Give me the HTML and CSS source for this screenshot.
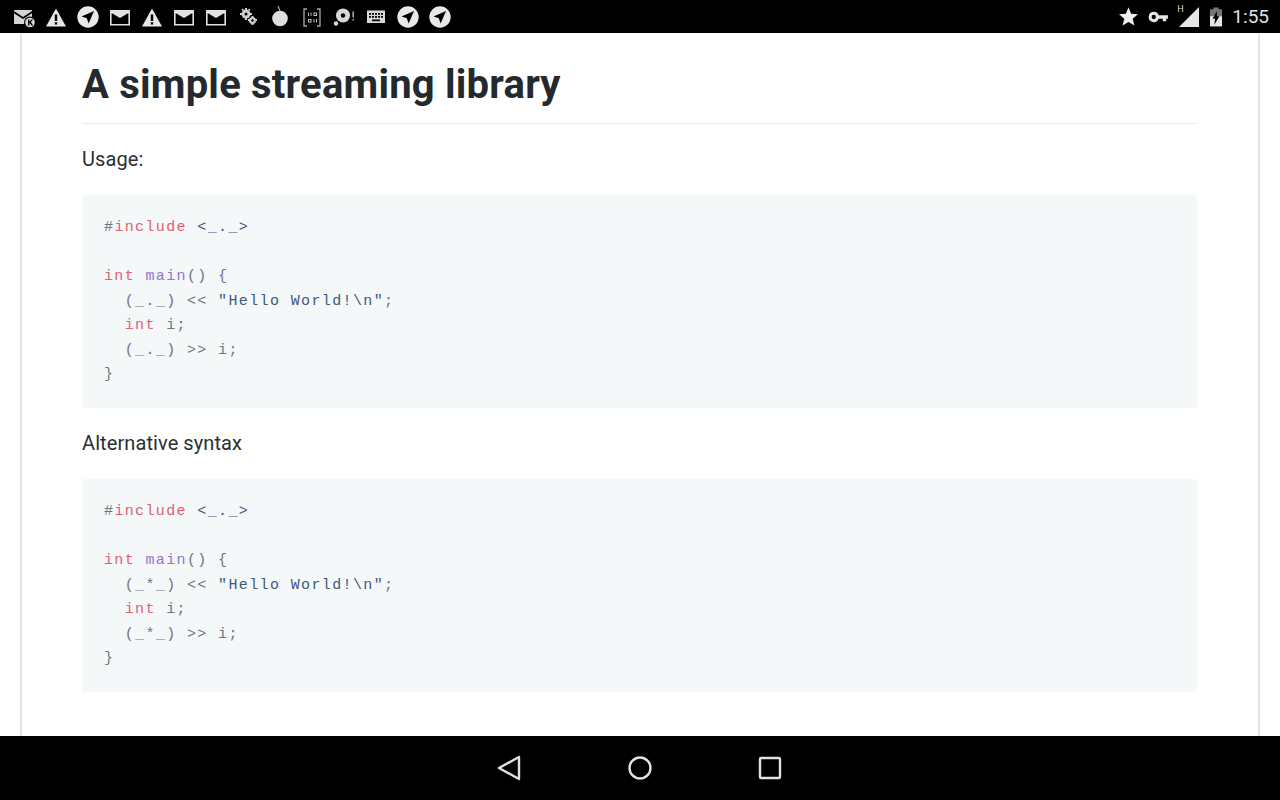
FILE: index.html
```html
<!DOCTYPE html>
<html lang="en">
<head>
<meta charset="utf-8">
<title>A simple streaming library</title>
<link rel="stylesheet" href="styles.css">
</head>
<body>
<svg class="defs" width="0" height="0" aria-hidden="true">
  <defs>
    <symbol id="warn" viewBox="0 0 24 24"><path fill="#e6e6e6" d="M2 21.500 12 3.500l10 18z"/><path fill="#000" d="M10.800 9.500h2.400v6.500h-2.400zM10.800 17.200h2.400v2.400h-2.400z"/></symbol>
    <symbol id="mail" viewBox="0 0 24 24"><path fill="#e2e2e2" d="M2 5h20v15.500H2z"/><path fill="#000" d="M3.600 8 12 13l8.400-5v10.900H3.600z"/></symbol>
    <symbol id="nav" viewBox="0 0 24 24"><circle cx="12" cy="12" r="10.700" fill="#e8e8e8"/><path fill="#000" d="M18 6 5.500 11.400l5.300 1.800 1.800 5.300z"/></symbol>
  </defs>
</svg>
<header class="status">
  <div class="status-left">
    <svg class="ic" viewBox="0 0 24 24"><path fill="#d4d4d4" d="M2 5h18v14H2z"/><path fill="#000" d="M2 6l9 6 9-6v2.200L11 14 2 8.200z"/><circle cx="18" cy="17.500" r="6" fill="#000"/><circle cx="18" cy="17.500" r="4.800" fill="#d8d8d8"/><path fill="#000" d="M16 14.500h1.400v2.300l2-2.300h1.700l-2.200 2.600 2.300 3.300h-1.700l-1.600-2.300-.5.500v1.800H16z"/></svg>
    <svg class="ic"><use href="#warn"/></svg>
    <svg class="ic"><use href="#nav"/></svg>
    <svg class="ic"><use href="#mail"/></svg>
    <svg class="ic"><use href="#warn"/></svg>
    <svg class="ic"><use href="#mail"/></svg>
    <svg class="ic"><use href="#mail"/></svg>
    <svg class="ic" viewBox="0 0 24 24"><g fill="#cfcfcf"><circle cx="10" cy="9" r="4.500"/><circle cx="16.500" cy="15.500" r="3.500"/><path d="M9 3h2v2H9zM9 13h2v2H9zM4 8h2v2H4zM14 8h2v2h-2zM5.500 4.500 7 3.500 8 5 6.500 6zM13 3.500l1.500 1-1 1.500L12 5zM15.500 11h2v2h-2zM19 14h2v2h-2zM15.500 18h2v2h-2zM12 14h2v2h-2z"/></g><circle cx="10" cy="9" r="1.500" fill="#000"/><circle cx="16.500" cy="15.500" r="1.200" fill="#000"/></svg>
    <svg class="ic" viewBox="0 0 24 24"><circle cx="12" cy="13.500" r="7.800" fill="#dedede"/><path d="M12 6 10 1" stroke="#aaa" stroke-width="1.200" fill="none"/></svg>
    <svg class="ic" viewBox="0 0 24 24"><path d="M7 4H4v17h3M17 4h3v17h-3" stroke="#aaa" stroke-width="1.300" fill="none"/><path fill="#bbb" d="M8 7.500h1v3.500H8zM10.500 7.500h1v3.500h-1zM13.500 7.500h3.500v3.500h-3.500zM8 14h3.500v3.500H8zM13.500 14h1v3.500h-1zM16 14h1v3.500h-1z"/><path fill="#000" d="M14.500 8.500H16V10h-1.500zM9 15h1.500v1.500H9z"/></svg>
    <svg class="ic" viewBox="0 0 24 24"><circle cx="11" cy="10.500" r="7" fill="#d8d8d8"/><circle cx="11" cy="10.500" r="2.200" fill="#000"/><circle cx="4" cy="18.500" r="2.200" fill="#d8d8d8"/><path fill="#bbb" d="M20.500 6.500h1.400v6h-1.400zM20.500 14h1.400v1.500h-1.400z"/></svg>
    <svg class="ic" viewBox="0 0 24 24"><path fill="#d8d8d8" d="M3 5.500h18V18H3z"/><path fill="#000" d="M5 8h2v1.800H5zM8 8h2v1.800H8zM11 8h2v1.800h-2zM14 8h2v1.800h-2zM17 8h2v1.800h-2zM5 11h2v1.800H5zM8 11h2v1.800H8zM11 11h2v1.800h-2zM14 11h2v1.800h-2zM17 11h2v1.800h-2zM8 14.500h8v1.800H8z"/></svg>
    <svg class="ic"><use href="#nav"/></svg>
    <svg class="ic"><use href="#nav"/></svg>
  </div>
  <div class="status-right">
    <svg class="ic-star" viewBox="0 0 24 24"><path fill="#eee" d="m12 1.500 3 7.300 7.800.6-6 5.200 1.900 7.700-6.700-4.100-6.700 4.100 1.900-7.700-6-5.200 7.800-.6z"/></svg>
    <svg class="ic-key" viewBox="0 0 24 14"><path fill="#e6e6e6" fill-rule="evenodd" d="M6.500 1a6 6 0 0 1 5.700 4H23v4h-2v3h-4V9h-4.800A6 6 0 1 1 6.500 1zm0 3.500a2.500 2.500 0 1 0 0 5 2.500 2.500 0 0 0 0-5z"/></svg>
    <span class="signal"><span class="h">H</span><svg class="ic-signal" viewBox="0 0 20 20"><path fill="#e6e6e6" d="M20 0v20H0z"/></svg></span>
    <svg class="ic-batt" viewBox="0 0 14 22"><path fill="#777" d="M4 0h6v2h4v8H0V2h4z"/><path fill="#e6e6e6" d="M0 10h14v12H0z"/><path fill="#000" d="M8 4 3 13h3l-1 7 6-10H8z"/></svg>
    <span class="clock">1:55</span>
  </div>
</header>
<main class="page">
  <article class="sheet">
    <h1 class="title">A simple streaming library</h1>
    <p class="para">Usage:</p>
    <div class="code">
      <div class="line"><span class="kw">#</span><span class="pp">include</span><span class="kw"> </span><span class="st">&lt;_._&gt;</span></div>
      <div class="line"></div>
      <div class="line"><span class="pp">int</span><span class="kw"> </span><span class="fn">main</span><span class="kw">() {</span></div>
      <div class="line"><span class="kw">  (_._) &lt;&lt; </span><span class="st">"Hello World!\n"</span><span class="kw">;</span></div>
      <div class="line"><span class="kw">  </span><span class="pp">int</span><span class="kw"> i;</span></div>
      <div class="line"><span class="kw">  (_._) &gt;&gt; i;</span></div>
      <div class="line"><span class="kw">}</span></div>
    </div>
    <p class="para">Alternative syntax</p>
    <div class="code">
      <div class="line"><span class="kw">#</span><span class="pp">include</span><span class="kw"> </span><span class="st">&lt;_._&gt;</span></div>
      <div class="line"></div>
      <div class="line"><span class="pp">int</span><span class="kw"> </span><span class="fn">main</span><span class="kw">() {</span></div>
      <div class="line"><span class="kw">  (_*_) &lt;&lt; </span><span class="st">"Hello World!\n"</span><span class="kw">;</span></div>
      <div class="line"><span class="kw">  </span><span class="pp">int</span><span class="kw"> i;</span></div>
      <div class="line"><span class="kw">  (_*_) &gt;&gt; i;</span></div>
      <div class="line"><span class="kw">}</span></div>
    </div>
  </article>
</main>
<nav class="navbar">
  <svg class="nb nb-back" viewBox="0 0 24 26"><path d="M22 2 2 13l20 11z" fill="none" stroke="#e2e2e2" stroke-width="2.400" stroke-linejoin="round"/></svg>
  <svg class="nb" viewBox="0 0 24 26"><circle cx="12" cy="13" r="10.500" fill="none" stroke="#e2e2e2" stroke-width="2.400"/></svg>
  <svg class="nb" viewBox="0 0 24 26"><rect x="2" y="3" width="20" height="20" rx="1" fill="none" stroke="#e2e2e2" stroke-width="2.400"/></svg>
</nav>
</body>
</html>
```
FILE: styles.css
```css
html, body {
  margin: 0;
  height: 100%;
  overflow: hidden;
}
body {
  display: flex;
  flex-direction: column;
  height: 800px;
  background: #fff;
  font-family: Roboto, "Liberation Sans", sans-serif;
  color: #24292e;
}
.defs { display: none; }
.status {
  flex: 0 0 33px;
  background: #000;
  display: flex;
  justify-content: space-between;
  align-items: center;
  padding: 0 11px 0 12px;
}
.status-left { display: flex; gap: 8px; }
.ic { width: 24px; height: 24px; display: block; }
.status-right { display: flex; align-items: center; }
.ic-star { width: 21px; height: 21px; display: block; margin-right: 9px; }
.ic-key { width: 21px; height: 12px; display: block; margin-right: 7px; }
.signal { display: flex; align-items: flex-start; width: 23px; height: 20px; position: relative; margin-right: 11px; }
.h { position: absolute; left: 1px; top: -3px; font-size: 9px; color: #ddd; }
.ic-signal { width: 20px; height: 20px; display: block; margin-left: 3px; }
.ic-batt { width: 12px; height: 20px; display: block; margin-right: 10px; }
.clock { font-size: 19px; color: #e2e2e2; line-height: 24px; }
.page {
  flex: 1;
  overflow: hidden;
  padding: 0 20px 0 20px;
}
.sheet {
  height: 100%;
  box-sizing: border-box;
  border-left: 2px solid #e2e4e6;
  border-right: 2px solid #e2e4e6;
  padding: 0 61px 0 60px;
}
.title {
  margin: 0 0 17px;
  padding: 27px 0 13px;
  font-size: 40px;
  line-height: 50px;
  font-weight: 700;
  letter-spacing: 0.21px;
  border-bottom: 1px solid #e8eaec;
}
.para {
  margin: 0 0 23px;
  font-size: 20px;
  line-height: 36px;
  height: 31px;
  letter-spacing: 0.09px;
  color: #2a2f33;
}
.code {
  margin: 0 0 17px;
  padding: 21px 22px 20px;
  height: 172px;
  background: #f4f8f9;
  border-radius: 3px;
  font-family: "Liberation Mono", "Courier New", monospace;
  font-size: 15px;
  letter-spacing: 1.370px;
}
.line { height: 24.500px; line-height: 24.500px; white-space: pre; }
.kw { color: #70767c; }
.pp { color: #dd6272; }
.fn { color: #9274cf; }
.st { color: #40587a; }
.navbar {
  flex: 0 0 64px;
  background: #000;
  display: flex;
  justify-content: center;
  align-items: center;
  gap: 106px;
}
.nb { width: 24px; height: 26px; display: block; }
.nb-back { margin-left: -1px; margin-right: 1px; }
```
